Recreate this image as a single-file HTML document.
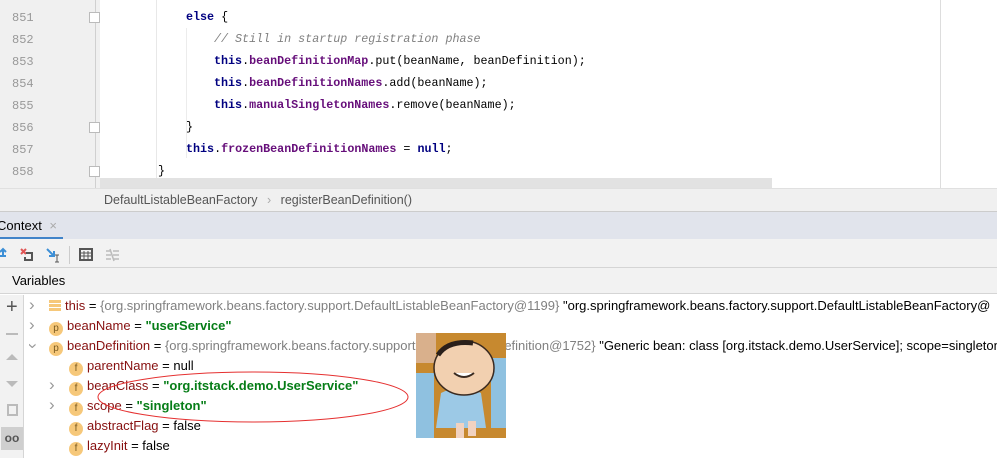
<!DOCTYPE html>
<html><head><meta charset="utf-8"><style>
*{margin:0;padding:0;box-sizing:border-box}
body{width:997px;height:458px;overflow:hidden;background:#fff;position:relative;font-family:"Liberation Sans",sans-serif}
.abs{position:absolute}
.gut{left:0;top:0;width:100px;height:188px;background:#f0f0f0}
.ln{position:absolute;left:12px;font:12px "Liberation Mono",monospace;color:#999}
.code{position:absolute;font:11.7px "Liberation Mono",monospace;color:#000;white-space:pre}
.k{color:#000080;font-weight:bold}
.f{color:#660e7a;font-weight:bold}
.c{color:#808080;font-style:italic}
.row{position:absolute;font-size:13px;white-space:pre;color:#000;height:20px;line-height:20px}
.nm{color:#871010}
.gr{color:#808080}
.st{color:#067d17;font-weight:bold}
.ic{display:inline-block;width:14px;height:14px;border-radius:7px;background:#f6c87a;color:#7a5a20;font-size:10px;line-height:14px;text-align:center;vertical-align:-1px;margin-right:4px}
.ar{position:absolute;color:#999;font-size:17px;line-height:20px}
</style></head><body>
<div class="abs gut"></div>
<div class="abs" style="left:95px;top:0;width:1px;height:188px;background:#d0d0d0"></div>
<div class="abs" style="left:940px;top:0;width:1px;height:188px;background:#ddd"></div>
<div class="abs" style="left:156px;top:0;width:1px;height:180px;background:#e8e8e8"></div>
<div class="abs" style="left:186px;top:28px;width:1px;height:130px;background:#ececec"></div>
<div class="ln" style="top:11px">851</div>
<div class="ln" style="top:33px">852</div>
<div class="ln" style="top:55px">853</div>
<div class="ln" style="top:77px">854</div>
<div class="ln" style="top:99px">855</div>
<div class="ln" style="top:121px">856</div>
<div class="ln" style="top:143px">857</div>
<div class="ln" style="top:165px">858</div>
<div class="abs" style="left:89px;top:12px;width:11px;height:11px;border:1px solid #bbb;background:#fff"></div>
<div class="abs" style="left:89px;top:122px;width:11px;height:11px;border:1px solid #bbb;background:#fff"></div>
<div class="abs" style="left:89px;top:166px;width:11px;height:11px;border:1px solid #bbb;background:#fff"></div>
<div class="code" style="left:186px;top:10px"><span class="k">else</span> {</div>
<div class="code" style="left:214px;top:32px"><span class="c">// Still in startup registration phase</span></div>
<div class="code" style="left:214px;top:54px"><span class="k">this</span>.<span class="f">beanDefinitionMap</span>.put(beanName, beanDefinition);</div>
<div class="code" style="left:214px;top:76px"><span class="k">this</span>.<span class="f">beanDefinitionNames</span>.add(beanName);</div>
<div class="code" style="left:214px;top:98px"><span class="k">this</span>.<span class="f">manualSingletonNames</span>.remove(beanName);</div>
<div class="code" style="left:186px;top:120px">}</div>
<div class="code" style="left:186px;top:142px"><span class="k">this</span>.<span class="f">frozenBeanDefinitionNames</span> = <span class="k">null</span>;</div>
<div class="code" style="left:158px;top:164px">}</div>
<div class="abs" style="left:100px;top:178px;width:672px;height:10px;background:#e2e2e2"></div>
<div class="abs" style="left:0;top:188px;width:997px;height:24px;background:#f0f0f0;border-top:1px solid #e0e0e0;border-bottom:1px solid #ccc"></div>
<div class="abs" style="left:104px;top:193px;font-size:12.5px;color:#555">DefaultListableBeanFactory <span style="color:#aaa;margin:0 6px">›</span> registerBeanDefinition()</div>
<div class="abs" style="left:0;top:212px;width:997px;height:27px;background:#e1e4ec"></div>
<div class="abs" style="left:-3px;top:218px;font-size:13px;color:#000">Context <span style="color:#aaa;margin-left:4px">×</span></div>
<div class="abs" style="left:0;top:237px;width:63px;height:3px;background:#4083c9"></div>
<div class="abs" style="left:0;top:239px;width:997px;height:29px;background:#f2f2f2;border-bottom:1px solid #d5d5d5"></div>
<svg class="abs" style="left:0;top:244px" width="130" height="20">
<path d="M0 12h6M3 5v7M0 8l3-3 3 3" stroke="#3d8fd6" stroke-width="2" fill="none"/>
<path d="M21 5l5 5M26 5l-5 5" stroke="#e05555" stroke-width="2"/><path d="M26 9h6v7h-7v-3" stroke="#555" stroke-width="2" fill="none"/>
<path d="M47 5l7 7M54 7v5h-5" stroke="#3d8fd6" stroke-width="2" fill="none"/><path d="M55 11h4M57 11v7M55 18h4" stroke="#555" stroke-width="1"/>
<rect x="69" y="2" width="1" height="18" fill="#ccc"/>
<rect x="80" y="5" width="12" height="11" fill="none" stroke="#555" stroke-width="2"/><path d="M80 9h12M80 12h12M84 7v9M88 7v9" stroke="#555" stroke-width="1"/>
<path d="M106 7h5M106 11h5M106 15h5M113 7h6M113 11h6M113 15h6M110 5l4 12" stroke="#bbb" stroke-width="1.5"/>
</svg>
<div class="abs" style="left:0;top:268px;width:997px;height:26px;background:#f2f2f2;border-bottom:1px solid #d5d5d5"></div>
<div class="abs" style="left:12px;top:273px;font-size:13px">Variables</div>
<div class="abs" style="left:0;top:295px;width:24px;height:163px;background:#f2f2f2;border-right:1px solid #d5d5d5"></div>
<div class="abs" style="left:6px;top:296px;font-size:20px;color:#555">+</div>
<div class="abs" style="left:6px;top:333px;width:12px;height:2px;background:#bbb"></div>
<div class="abs" style="left:6px;top:354px;width:0;height:0;border-left:6px solid transparent;border-right:6px solid transparent;border-bottom:6px solid #bbb"></div>
<div class="abs" style="left:6px;top:381px;width:0;height:0;border-left:6px solid transparent;border-right:6px solid transparent;border-top:6px solid #bbb"></div>
<div class="abs" style="left:7px;top:404px;width:11px;height:12px;border:2px solid #bbb;background:#f2f2f2"></div>
<div class="abs" style="left:1px;top:427px;width:22px;height:23px;background:#cfcfcf;color:#555;font-size:12px;text-align:center;line-height:23px;font-weight:bold">oo</div>

<div class="ar" style="left:29px;top:295px">›</div>
<div class="ar" style="left:29px;top:315px">›</div>
<div class="ar" style="left:30px;top:336px;transform:rotate(90deg)">›</div>
<div class="ar" style="left:49px;top:375px">›</div>
<div class="ar" style="left:49px;top:395px">›</div>
<div class="row" style="left:49px;top:296px"><span style="display:inline-block;width:12px;height:11px;background:linear-gradient(#f6c87a 0 3px,transparent 3px 4px,#f6c87a 4px 7px,transparent 7px 8px,#f6c87a 8px);margin-right:4px;vertical-align:-1px"></span><span class="nm">this</span> = <span class="gr">{org.springframework.beans.factory.support.DefaultListableBeanFactory@1199}</span> "org.springframework.beans.factory.support.DefaultListableBeanFactory@</div>
<div class="row" style="left:49px;top:316px"><span class="ic">p</span><span class="nm">beanName</span> = <span class="st">"userService"</span></div>
<div class="row" style="left:49px;top:336px"><span class="ic">p</span><span class="nm">beanDefinition</span> = <span class="gr">{org.springframework.beans.factory.support.GenericBeanDefinition@1752}</span> "Generic bean: class [org.itstack.demo.UserService]; scope=singleton</div>
<div class="row" style="left:69px;top:356px"><span class="ic">f</span><span class="nm">parentName</span> = null</div>
<div class="row" style="left:69px;top:376px"><span class="ic">f</span><span class="nm">beanClass</span> = <span class="st">"org.itstack.demo.UserService"</span></div>
<div class="row" style="left:69px;top:396px"><span class="ic">f</span><span class="nm">scope</span> = <span class="st">"singleton"</span></div>
<div class="row" style="left:69px;top:416px"><span class="ic">f</span><span class="nm">abstractFlag</span> = false</div>
<div class="row" style="left:69px;top:436px"><span class="ic">f</span><span class="nm">lazyInit</span> = false</div>

<svg class="abs" style="left:95px;top:368px" width="320" height="60"><ellipse cx="158" cy="29" rx="155" ry="25" fill="none" stroke="#e53030" stroke-width="1"/></svg>

<svg class="abs" style="left:416px;top:333px" width="90" height="105">
<rect width="90" height="105" fill="#c7892f"/>
<rect x="0" y="40" width="18" height="65" fill="#8fc1e0"/>
<rect x="75" y="25" width="15" height="70" fill="#8fc1e0"/>
<path d="M0 0h20v30h-20z" fill="#d9b08c"/>
<path d="M25 60q20-10 40 0l5 35h-50z" fill="#9cc9e6"/>
<rect x="40" y="90" width="8" height="15" fill="#f1d2c0"/><rect x="52" y="88" width="8" height="15" fill="#f1d2c0"/>
<ellipse cx="48" cy="35" rx="30" ry="27" fill="#f2d0b0" stroke="#3a2a20" stroke-width="1.5"/>
<path d="M22 22q10-15 35-12" stroke="#2a1f1a" stroke-width="5" fill="none"/>
<path d="M38 40q10 8 20 0" stroke="#3a2a20" stroke-width="2" fill="#fff"/>
</svg>
</body></html>
